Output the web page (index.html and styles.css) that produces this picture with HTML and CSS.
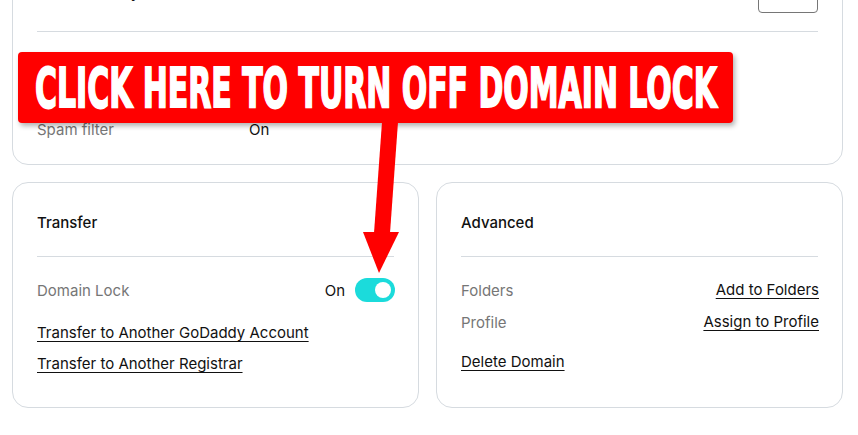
FILE: index.html
```html
<!DOCTYPE html>
<html lang="en">
<head>
<meta charset="utf-8">
<title>Domain settings</title>
<link rel="stylesheet" href="styles.css">
</head>
<body>
<div class="page">
  <section class="card card-top">
    <div class="card-head">
      <h2 class="card-title">Email Security</h2>
      <button class="btn-outline" type="button">Edit</button>
    </div>
    <hr class="divider">
    <div class="kv-row" aria-hidden="true"></div>
    <div class="kv-row" aria-hidden="true"></div>
    <div class="kv-row"><span class="kv-label">Spam filter</span><span class="kv-value">On</span></div>
  </section>

  <div class="grid">
    <section class="card">
      <h2 class="card-title head-pad">Transfer</h2>
      <hr class="divider">
      <div class="row">
        <span class="label">Domain Lock</span>
        <span class="toggle-wrap"><span class="toggle-text">On</span><span class="toggle"><span class="knob"></span></span></span>
      </div>
      <a class="link link-first" href="#">Transfer to Another GoDaddy Account</a>
      <a class="link link-next" href="#">Transfer to Another Registrar</a>
    </section>

    <section class="card">
      <h2 class="card-title head-pad">Advanced</h2>
      <hr class="divider">
      <div class="row">
        <span class="label">Folders</span>
        <a class="link" href="#">Add to Folders</a>
      </div>
      <div class="row">
        <span class="label">Profile</span>
        <a class="link" href="#">Assign to Profile</a>
      </div>
      <a class="link link-delete" href="#">Delete Domain</a>
    </section>
  </div>
</div>

<div class="callout"><span class="callout-text">CLICK HERE TO TURN OFF DOMAIN LOCK</span></div>
<svg class="arrow" width="858" height="435" viewBox="0 0 858 435" aria-hidden="true">
  <polygon points="382,122 398,122 390,233 374,233" fill="#ff0000"/>
  <polygon points="363,232 399,232 379,273" fill="#ff0000"/>
</svg>
</body>
</html>
```

FILE: styles.css
```css
* { box-sizing: border-box; }
html, body { margin: 0; padding: 0; background: #fff; }
body {
  font-family: Inter, "Noto Sans", Arial, sans-serif;
  font-size: 15px;
  color: #111111;
  width: 858px;
  height: 435px;
  overflow: hidden;
  position: relative;
}
.page {
  width: 858px;
  padding: 0 15px 0 12px;
}
.card {
  border: 1px solid #d6dbe0;
  border-radius: 16px;
  background: #fff;
  padding: 27px 24px 31px;
  display: flex;
  flex-direction: column;
}
.card-top {
  margin-top: -51px;
  padding: 23px 24px 19px;
}
.card-head {
  display: flex;
  align-items: center;
  justify-content: space-between;
  height: 40px;
}
.card-title {
  margin: 0;
  font-size: 15px;
  font-weight: 500;
  line-height: 24px;
  color: #111;
}
.head-pad { margin-top: 1px; }
.btn-outline {
  width: 60px;
  height: 40px;
  border: 1px solid #767676;
  border-radius: 4px;
  background: #fff;
  font: inherit;
  color: #111;
}
.divider {
  border: 0;
  border-top: 1px solid #d6dbe0;
  margin: 0;
  height: 0;
}
.card-top .divider { margin-top: 18px; margin-bottom: 17px; }
.head-pad + .divider { margin-top: 21px; margin-bottom: 17px; }
.kv-row {
  display: flex;
  height: 32px;
  align-items: center;
}
.kv-label {
  width: 212px;
  color: #767676;
}
.kv-value { color: #111; }
.row {
  display: flex;
  height: 32px;
  align-items: center;
  justify-content: space-between;
}
.label { color: #767676; }
.toggle-wrap {
  display: flex;
  align-items: center;
  gap: 10px;
  margin-right: -1px;
}
.toggle {
  width: 40px;
  height: 24px;
  border-radius: 12px;
  background: #1bdbdb;
  display: flex;
  align-items: center;
  justify-content: flex-end;
  padding-right: 4px;
}
.knob {
  width: 16px;
  height: 16px;
  border-radius: 50%;
  background: #fff;
}
.link {
  color: #111;
  text-decoration: underline;
  text-underline-offset: 3px;
  line-height: 24px;
}
.row .link { margin-right: -1px; }
.link-first { margin-top: 15px; align-self: flex-start; }
.link-next { margin-top: 7px; align-self: flex-start; }
.link-delete { margin-top: 12px; align-self: flex-start; }
.grid {
  display: grid;
  grid-template-columns: 1fr 1fr;
  gap: 17px;
  margin-top: 17px;
}
.callout {
  position: absolute;
  left: 18px;
  top: 52px;
  width: 715px;
  height: 71px;
  background: #ff0000;
  border-radius: 4px;
  box-shadow: 2px 3px 5px rgba(0,0,0,0.3);
  overflow: hidden;
}
.callout-text {
  position: absolute;
  left: 17px;
  top: 9px;
  display: inline-block;
  white-space: nowrap;
  font-family: "DejaVu Sans Condensed", "DejaVu Sans", sans-serif;
  font-weight: bold;
  font-size: 55px;
  line-height: 55px;
  color: #fff;
  -webkit-text-stroke: 1.8px #fff;
  transform: scaleX(0.605);
  transform-origin: left top;
}
.arrow {
  position: absolute;
  left: 0;
  top: 0;
  pointer-events: none;
}
```
